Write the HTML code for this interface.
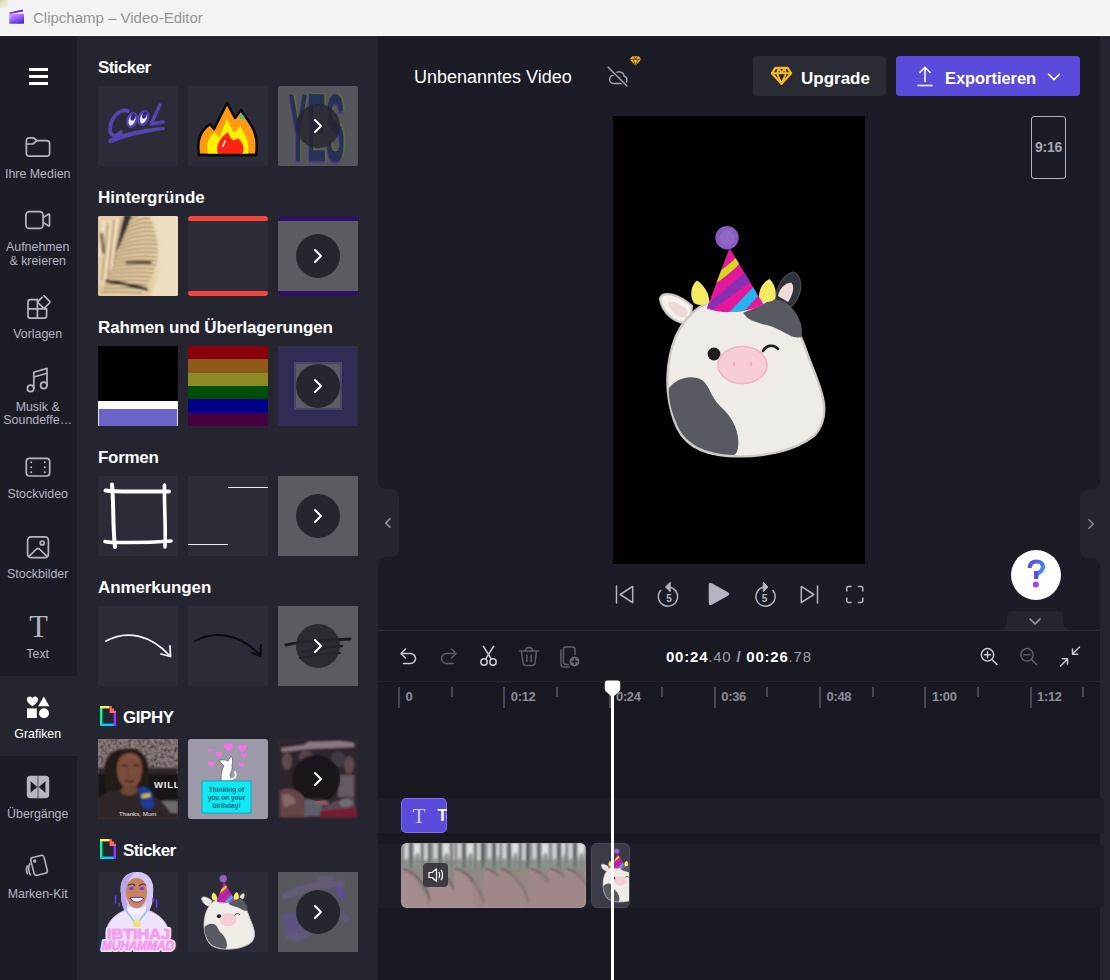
<!DOCTYPE html>
<html lang="de">
<head>
<meta charset="utf-8">
<title>Clipchamp – Video-Editor</title>
<style>
*{box-sizing:border-box;margin:0;padding:0}
html,body{width:1110px;height:980px;overflow:hidden;background:#1c1c26;font-family:"Liberation Sans",sans-serif;}
.abs{position:absolute}
#app{position:relative;width:1110px;height:980px;overflow:hidden;background:#1c1c26}
#titlebar{position:absolute;left:0;top:0;width:1110px;height:37px;background:#f3f3f3;border-bottom:1px solid #0e0e14;box-shadow:inset 0 -1px 0 #fff}
#titlebar .ttl{position:absolute;left:33px;top:8px;font-size:15px;color:#939393;white-space:nowrap;line-height:20px}
#sidebar{position:absolute;left:0;top:36px;width:77px;height:944px;background:#1c1c26}
#panel{position:absolute;left:77px;top:36px;width:301px;height:944px;background:#25252f}
.navlbl{position:absolute;left:-10.800px;width:97px;text-align:center;font-size:12.400px;line-height:14px;color:#b5b5c0;white-space:nowrap}
.h{position:absolute;left:98px;font-weight:bold;font-size:17px;color:#fff;white-space:nowrap;line-height:20px}
.th{position:absolute;width:80px;height:80px;background:#2c2c38;overflow:hidden;border-radius:2px}
.more{position:absolute;left:18px;top:18px;width:44px;height:44px;border-radius:22px;background:#26262e}
.more svg{position:absolute;left:14px;top:13px}
#main{position:absolute;left:378px;top:36px;width:722px;height:594px;background:#1c1c26}
#rstrip{position:absolute;left:1100px;top:36px;width:10px;height:944px;background:#25252f}
#timeline{position:absolute;left:378px;top:630px;width:722px;height:350px;background:#191922}
</style>
</head>
<body>
<div id="app">
<svg width="0" height="0" style="position:absolute">
<defs>
<symbol id="cow" viewBox="655 220 180 245">
  <!-- right ear (dark) -->
  <path d="M775 302 C776 286 784 274 793 272 C800 274 802 284 800 292 C798 300 794 304 790 308 Z" fill="#30343a" stroke="#474d52" stroke-width="1.200"/>
  <path d="M778 296 C779 289 785 283 791 282.500 C794.500 285 794 293 788 302 Z" fill="#efdbd9"/>
  <!-- left ear -->
  <path d="M690 322 C676 326 662 312 660 299 C662 290 678 294 692 306 Z" fill="#f4f1ee" stroke="#d0cbc5" stroke-width="2.200"/>
  <path d="M686 318 C677 318 669 309 668 303 C671 300 680 303 688 311 Z" fill="#f0d8d7"/>
  <!-- body -->
  <path d="M735 296 C768 294 794 314 806 350 C816 380 836 410 815 435 C794 452 760 458 728 456 C700 454 682 444 674 420 C664 392 666 360 676 336 C688 310 708 298 735 296 Z" fill="#efece8" stroke="#cfcac4" stroke-width="2.400"/>
  <!-- dark patch top right -->
  <path d="M743 313 C752 309 760 306 763.500 304 C768 301 772 299 776 299.500 C781 300 785 302 788 304.500 C795 310 799 317 801 324 C802 329 802 333 801.500 337 C797 338 793 337 791 336 C787 334 783 332 779.500 330 C774 327 768 325 762 324 C756 322 750 320 747 317.500 Z" fill="#575b61"/>
  <!-- dark patch bottom left -->
  <path d="M669 388 C676 378 692 374 702 380 C710 386 710 396 720 406 C734 418 740 434 738 448 C737 452 736 454 734 455 C704 454 684 444 676 422 C671 410 668 398 669 388 Z" fill="#575b61"/>
  <!-- horns -->
  <path d="M694 303 C689 296 691 285 697 280.500 C703 284 710 294 709 302 C705 305.500 698 306 694 303 Z" fill="#f6ea62"/>
  <path d="M759 299 C758 290 763 282 769.500 279 C775 284 777 293 775 299 C771 303 763 303 759 299 Z" fill="#f6ea62"/>
  <!-- hat -->
  <path d="M729.500 248 L706.800 308.400 C722 314.500 748 313 763.500 304.300 Z" fill="#e4189c"/>
  <clipPath id="hatc"><path d="M729.500 248 L706.800 308.400 C722 314.500 748 313 763.500 304.300 Z"/></clipPath>
  <g clip-path="url(#hatc)">
    <path d="M738.400 254.900 L740 263 C732 272 722 279 714.900 284 L718.100 271.900 C726 267 733 261 738.400 254.900 Z" fill="#d9d622"/>
    <path d="M705 306 L745.700 271.900 L750.500 281.600 L712 310 Z" fill="#8a2eb4"/>
    <path d="M729.500 312 L753.800 286.500 L757.800 296.200 L742.400 313 Z" fill="#22b4ee"/>
  </g>
  <circle cx="727" cy="237.800" r="11.700" fill="#8a5cbf"/>
  <circle cx="727" cy="237.800" r="7.500" fill="#9468c6"/>
  <!-- eye / wink -->
  <circle cx="714" cy="354" r="6.400" fill="#1d1d1d"/>
  <path d="M763 351 C766 345 774 344 778 349" fill="none" stroke="#1d1d1d" stroke-width="2.600" stroke-linecap="round"/>
  <!-- snout -->
  <ellipse cx="742.500" cy="365" rx="24.500" ry="18.500" fill="#f7cdd6" stroke="#f2b3c2" stroke-width="1.600"/>
  <ellipse cx="734" cy="364" rx="1.300" ry="2.600" fill="#eeb0bf"/>
  <ellipse cx="751" cy="364" rx="1.300" ry="2.600" fill="#eeb0bf"/>
</symbol>
<symbol id="chev" viewBox="0 0 16 18"><path d="M5 3 L11 9 L5 15" fill="none" stroke="#fff" stroke-width="2" stroke-linecap="round" stroke-linejoin="round"/></symbol>
<symbol id="giphy" viewBox="0 0 16 20">
  <rect x="0" y="1" width="2.400" height="18" fill="#00ff99"/>
  <rect x="0" y="17.600" width="16" height="2.400" fill="#00ccff"/>
  <rect x="13.600" y="7" width="2.400" height="13" fill="#9933ff"/>
  <rect x="0" y="0" width="9.600" height="2.400" fill="#fff35c"/>
  <path d="M9.600 0 h2.200 v2.400 h2.100 v2.300 h2.100 v2.400 h-6.400z" fill="#ff6666"/>
</symbol>
</defs>
</svg>

<!-- TITLE BAR -->
<div id="titlebar">
  <svg class="abs" style="left:8px;top:8px" width="18" height="18" viewBox="8 8 18 18">
    <defs><linearGradient id="cc" x1="0" y1="0" x2=".6" y2="1"><stop offset="0" stop-color="#dca6ff"/><stop offset=".45" stop-color="#a86cf8"/><stop offset="1" stop-color="#4a2edc"/></linearGradient></defs>
    <path d="M9.400 12.400 L22.600 9.400 L23.200 11.600 L9.800 13.900 Z" fill="#5b2fc0"/>
    <rect x="9.300" y="13.700" width="14.700" height="10.100" rx=".6" fill="url(#cc)"/>
  </svg>
  <div class="abs" style="left:0;top:0;width:8px;height:8px;background:radial-gradient(circle at 0 0,#cfcf98 0,#e4e4c4 45%,#f3f3f3 100%)"></div>
  <div class="ttl">Clipchamp – Video-Editor</div>
</div>

<!-- SIDEBAR -->
<div id="sidebar"></div>
<!-- selected nav bg -->
<div class="abs" style="left:0;top:676px;width:77px;height:80px;background:#25252f"></div>
<div class="abs" style="left:0;top:596px;width:77px;height:80px;background:#1c1c26;border-bottom-right-radius:6px"></div>
<div class="abs" style="left:0;top:756px;width:77px;height:80px;background:#1c1c26;border-top-right-radius:6px"></div>
<!-- hamburger -->
<div class="abs" style="left:29px;top:68px;width:19px;height:3px;background:#fff"></div>
<div class="abs" style="left:29px;top:75px;width:19px;height:3px;background:#fff"></div>
<div class="abs" style="left:29px;top:82px;width:19px;height:3px;background:#fff"></div>
<!-- folder -->
<svg class="abs" style="left:24px;top:135px" width="28" height="24" viewBox="0 0 28 24" fill="none" stroke="#b6b6c3" stroke-width="1.7" stroke-linejoin="round" stroke-linecap="round">
  <path d="M2.4 5.4 a2.6 2.6 0 0 1 2.6 -2.6 h4.6 l3.2 2.8 h10.2 a2.6 2.6 0 0 1 2.6 2.6 v10.4 a2.6 2.6 0 0 1 -2.6 2.6 h-18 a2.6 2.6 0 0 1 -2.6 -2.6 z"/>
  <path d="M2.4 9 h6.6 l3.6 -3.2"/>
</svg>
<div class="navlbl" style="top:167px">Ihre Medien</div>
<!-- camera -->
<svg class="abs" style="left:24px;top:208px" width="28" height="24" viewBox="0 0 28 24" fill="none" stroke="#b6b6c3" stroke-width="1.7" stroke-linejoin="round" stroke-linecap="round">
  <rect x="1.9" y="3.6" width="17.2" height="16.8" rx="3.4"/>
  <path d="M19.1 9.6 l5.2 -3.3 q1.2 -.6 1.2 .8 v9.8 q0 1.4 -1.2 .8 l-5.2 -3.3"/>
</svg>
<div class="navlbl" style="top:240px">Aufnehmen</div>
<div class="navlbl" style="top:254px">&amp; kreieren</div>
<!-- templates -->
<svg class="abs" style="left:25px;top:293px" width="28" height="27" viewBox="0 0 28 27" fill="none" stroke="#b6b6c3" stroke-width="1.7" stroke-linejoin="round" stroke-linecap="round">
  <path d="M12.4 6.6 h-7 a2.4 2.4 0 0 0 -2.4 2.4 v13.8 a2.4 2.4 0 0 0 2.4 2.4 h13.8 a2.4 2.4 0 0 0 2.4 -2.4 v-6.6"/>
  <path d="M3 15.8 h18.6 M12.4 6.6 v18.6"/>
  <path d="M18.9 2.6 l5.6 5.6 q.9 .9 0 1.8 l-4.7 4.7 q-.9 .9 -1.8 0 l-4.7 -4.7 q-.9 -.9 0 -1.8 l3.8 -3.8"/>
</svg>
<div class="navlbl" style="top:327px">Vorlagen</div>
<!-- music -->
<svg class="abs" style="left:25px;top:365px" width="26" height="29" viewBox="0 0 26 29" fill="none" stroke="#b6b6c3" stroke-width="1.7" stroke-linejoin="round" stroke-linecap="round">
  <circle cx="5.6" cy="23.4" r="3.2"/><circle cx="18.8" cy="20.4" r="3.2"/>
  <path d="M8.8 23.4 V7.2 L22 3.4 V20.4 M8.8 12 L22 8.2"/>
</svg>
<div class="navlbl" style="top:400px">Musik &amp;</div>
<div class="navlbl" style="top:413px">Soundeffe…</div>
<!-- stock video -->
<svg class="abs" style="left:24px;top:455px" width="28" height="24" viewBox="0 0 28 24" fill="none" stroke="#b6b6c3" stroke-width="1.7" stroke-linejoin="round" stroke-linecap="round">
  <rect x="2.3" y="3.4" width="23.4" height="17.6" rx="3.2"/>
  <path d="M7.2 7.2v.1M7.2 12.2v.1M7.2 17.2v.1M20.8 7.2v.1M20.8 12.2v.1M20.8 17.2v.1" stroke-width="2"/>
</svg>
<div class="navlbl" style="top:487px">Stockvideo</div>
<!-- stock images -->
<svg class="abs" style="left:25px;top:534px" width="26" height="26" viewBox="0 0 26 26" fill="none" stroke="#b6b6c3" stroke-width="1.7" stroke-linejoin="round" stroke-linecap="round">
  <rect x="2.6" y="2.8" width="20.8" height="20.8" rx="3.4"/>
  <circle cx="17.2" cy="9" r="2"/>
  <path d="M4.2 22.2 l7.4 -7.2 q1.4 -1.2 2.8 0 l7.4 7.2"/>
</svg>
<div class="navlbl" style="top:567px">Stockbilder</div>
<!-- text -->
<div class="abs" style="left:28px;top:610px;width:21px;font-family:'Liberation Serif',serif;font-size:30.5px;line-height:34px;color:#b6b6c3;text-align:center">T</div>
<div class="navlbl" style="top:647px">Text</div>
<!-- graphics (selected) -->
<svg class="abs" style="left:25px;top:694px" width="26" height="26" viewBox="0 0 26 26" fill="#fff">
  <path d="M7.4 12.2 C3.8 9.6 1.8 7.8 1.8 5.4 a3 3 0 0 1 5.6 -1.4 a3 3 0 0 1 5.6 1.4 c0 2.4 -2 4.200 -5.600 6.800z"/>
  <path d="M18.800 2.400 l5.600 9.800 h-11.200z"/>
  <rect x="2" y="14.400" width="9.800" height="9.600"/>
  <circle cx="19" cy="19.200" r="5"/>
</svg>
<div class="navlbl" style="top:727px;color:#fff">Grafiken</div>
<!-- transitions -->
<svg class="abs" style="left:25px;top:774px" width="26" height="26" viewBox="0 0 26 26">
  <rect x="1.800" y="1.800" width="22.400" height="22.400" rx="3.600" fill="#b6b6c3"/>
  <path d="M5.600 7.200 l6.600 5.800 l-6.600 5.800z M20.400 7.200 l-6.600 5.800 l6.600 5.800z" fill="#1c1c26"/>
  <path d="M13 2 v22" stroke="#1c1c26" stroke-width="1.200" opacity=".55"/>
</svg>
<div class="navlbl" style="top:807px">Übergänge</div>
<!-- brand kit -->
<svg class="abs" style="left:24px;top:853px" width="28" height="26" viewBox="0 0 28 26" fill="none" stroke="#b6b6c3" stroke-width="1.600" stroke-linejoin="round" stroke-linecap="round">
  <g transform="rotate(-14 15 13)"><rect x="8.400" y="3.200" width="13.600" height="18.400" rx="2.600"/><circle cx="12" cy="7.200" r=".9" fill="#b6b6c3"/></g>
  <path d="M5.800 10.600 q-2.600 5.200 .6 11.200" />
  <path d="M3.200 13.200 q-1.600 3.600 .2 7.400" />
</svg>
<div class="navlbl" style="top:887px">Marken-Kit</div>

<!-- PANEL -->
<div id="panel"></div>
<!-- ===== Row 1: Sticker ===== -->
<div class="h" style="top:58px;letter-spacing:-.58px">Sticker</div>
<div class="th" style="left:98px;top:86px">
 <svg width="80" height="80" viewBox="0 0 80 80">
  <path d="M11 53 C26 46 48 42 66 41 C67 42 67 43 66 44 C50 46 30 50 14 57 C11 58 9 55 11 53 Z" fill="#5145b0"/>
  <path d="M30 25 C22 22 13 31 12 43 C12 50 18 52 23 46" fill="none" stroke="#5145b0" stroke-width="3.800" stroke-linecap="round"/>
  <ellipse cx="34" cy="34" rx="4.400" ry="7" transform="rotate(20 34 34)" fill="#e9e6ff" stroke="#5145b0" stroke-width="2.400"/>
  <ellipse cx="45.500" cy="32" rx="4.400" ry="7" transform="rotate(20 45.500 32)" fill="#e9e6ff" stroke="#5145b0" stroke-width="2.400"/>
  <ellipse cx="35" cy="31" rx="2.200" ry="3.800" transform="rotate(20 35 31)" fill="#332a80"/>
  <ellipse cx="46.500" cy="29" rx="2.200" ry="3.800" transform="rotate(20 46.500 29)" fill="#332a80"/>
  <path d="M62 19 L53 38 L65 36" fill="none" stroke="#5145b0" stroke-width="3.400" stroke-linecap="round" stroke-linejoin="round"/>
 </svg>
</div>
<div class="th" style="left:188px;top:86px">
 <svg width="80" height="80" viewBox="0 0 80 80">
  <path d="M11 69 C8 52 14 44 22 38 L26 43 L39 17 L47 32 L53 24 C60 36 72 44 68 69 Z" fill="#ff9a12" stroke="#0a0a0a" stroke-width="2.600" stroke-linejoin="round"/>
  <path d="M20 68 C17 56 22 50 27 46 L31 52 L39 33 L46 47 L52 40 C56 48 62 54 60 68 Z" fill="#fff200"/>
  <path d="M30 68 C27 60 32 52 40 46 C42 54 46 56 50 52 C56 58 57 64 54 68 Z" fill="#ff2412"/>
  <path d="M35 60 l2 -5" stroke="#fff" stroke-width="1.600" stroke-linecap="round"/>
  <rect x="52" y="29" width="4" height="4" transform="rotate(30 54 31)" fill="#19d3a2"/>
  <path d="M11 69 H68" stroke="#0a0a0a" stroke-width="2.600" stroke-linecap="round"/>
 </svg>
</div>
<div class="th" style="left:278px;top:86px;background:#55555c">
 <svg width="80" height="80" viewBox="0 0 80 80">
  <g font-family="Liberation Sans" font-weight="bold" transform="scale(.56 1)">
   <text x="19" y="75" fill="#5f6b3c" transform="translate(3 -1)" textLength="100" lengthAdjust="spacingAndGlyphs" style="font-size:97px">YES</text>
   <text x="19" y="75" fill="#4f3a7c" transform="translate(-1 2)" textLength="100" lengthAdjust="spacingAndGlyphs" style="font-size:97px">YES</text>
   <text x="19" y="75" fill="#263158" textLength="100" lengthAdjust="spacingAndGlyphs" style="font-size:97px">YES</text>
  </g>
 </svg>
 <div class="more" style="background:rgba(38,38,46,.82)"><svg width="16" height="18"><use href="#chev"/></svg></div>
</div>

<!-- ===== Row 2: Hintergründe ===== -->
<div class="h" style="top:188px">Hintergründe</div>
<div class="th" style="left:98px;top:216px;background:#e9dabb">
 <svg width="80" height="80" viewBox="0 0 80 80">
  <defs><filter id="bl1" x="-20%" y="-20%" width="140%" height="140%"><feGaussianBlur stdDeviation="1"/></filter>
  <filter id="bl2" x="-20%" y="-20%" width="140%" height="140%"><feGaussianBlur stdDeviation="2"/></filter>
  <linearGradient id="pg" x1="0" y1="0" x2="1" y2="0"><stop offset="0" stop-color="#dcc39a"/><stop offset=".65" stop-color="#e2cba2"/><stop offset=".82" stop-color="#ecdfc0"/><stop offset="1" stop-color="#ece0c2"/></linearGradient></defs>
  <rect width="80" height="80" fill="url(#pg)"/>
  <path d="M48 -4 C66 18 70 52 50 84 L84 84 L84 -4 Z" fill="#ecdfc0" filter="url(#bl2)"/>
  <g filter="url(#bl1)" stroke-linecap="round" fill="none">
   <path d="M0 0 h26 L16 30 L6 70 L0 70 Z" fill="#e6d0aa" stroke="none"/>
   <path d="M4 64 L10 8 M10 60 L16 4 M16 46 L23 2" stroke="#b89a70" stroke-width="1.700"/>
   <path d="M7 62 L13 6 M13 54 L19.500 3 M1 40 L6 6" stroke="#f3e6cc" stroke-width="1.800"/>
   <path d="M3.500 18 L5.500 36" stroke="#5c4838" stroke-width="3.200" opacity=".8"/>
   <path d="M27.0 8.0 Q41.5 -4.0 50.0 -2.0" stroke="#9a7c54" stroke-width="1.500"/>
   <path d="M27.0 9.9 Q41.5 -2.1 50.0 -0.1" stroke="#f0dcb6" stroke-width="1.300"/>
   <path d="M26.4 11.6 Q42.0 0.5 51.6 2.8" stroke="#9a7c54" stroke-width="1.500"/>
   <path d="M26.4 13.5 Q42.0 2.4 51.6 4.7" stroke="#f0dcb6" stroke-width="1.300"/>
   <path d="M25.5 15.2 Q42.3 4.8 53.2 7.3" stroke="#9a7c54" stroke-width="1.500"/>
   <path d="M25.5 17.1 Q42.3 6.7 53.2 9.2" stroke="#f0dcb6" stroke-width="1.300"/>
   <path d="M24.6 18.7 Q42.6 9.1 54.6 11.6" stroke="#9a7c54" stroke-width="1.500"/>
   <path d="M24.6 20.6 Q42.6 11.0 54.6 13.5" stroke="#f0dcb6" stroke-width="1.300"/>
   <path d="M23.6 22.3 Q42.8 13.4 56.0 15.9" stroke="#9a7c54" stroke-width="1.500"/>
   <path d="M23.6 24.2 Q42.8 15.3 56.0 17.8" stroke="#f0dcb6" stroke-width="1.300"/>
   <path d="M22.6 25.9 Q42.8 17.6 57.1 20.2" stroke="#9a7c54" stroke-width="1.500"/>
   <path d="M22.6 27.8 Q42.8 19.5 57.1 22.1" stroke="#f0dcb6" stroke-width="1.300"/>
   <path d="M21.5 29.5 Q42.7 21.8 58.0 24.4" stroke="#9a7c54" stroke-width="1.500"/>
   <path d="M21.5 31.4 Q42.7 23.7 58.0 26.3" stroke="#f0dcb6" stroke-width="1.300"/>
   <path d="M20.4 33.1 Q42.5 26.0 58.6 28.5" stroke="#9a7c54" stroke-width="1.500"/>
   <path d="M20.4 35.0 Q42.5 27.9 58.6 30.4" stroke="#f0dcb6" stroke-width="1.300"/>
   <path d="M19.2 36.6 Q42.1 30.2 59.0 32.7" stroke="#9a7c54" stroke-width="1.500"/>
   <path d="M19.2 38.5 Q42.1 32.1 59.0 34.6" stroke="#f0dcb6" stroke-width="1.300"/>
   <path d="M18.0 40.2 Q41.5 34.3 59.1 36.8" stroke="#9a7c54" stroke-width="1.500"/>
   <path d="M18.0 42.1 Q41.5 36.2 59.1 38.7" stroke="#f0dcb6" stroke-width="1.300"/>
   <path d="M16.8 43.8 Q40.8 38.5 58.8 40.9" stroke="#9a7c54" stroke-width="1.500"/>
   <path d="M16.8 45.7 Q40.8 40.4 58.8 42.8" stroke="#f0dcb6" stroke-width="1.300"/>
   <path d="M15.6 47.4 Q39.9 42.6 58.2 45.0" stroke="#9a7c54" stroke-width="1.500"/>
   <path d="M15.6 49.3 Q39.9 44.5 58.2 46.9" stroke="#f0dcb6" stroke-width="1.300"/>
   <path d="M14.3 50.9 Q38.8 46.8 57.3 49.0" stroke="#9a7c54" stroke-width="1.500"/>
   <path d="M14.3 52.8 Q38.8 48.7 57.3 50.9" stroke="#f0dcb6" stroke-width="1.300"/>
   <path d="M13.0 54.5 Q37.6 50.9 56.1 53.0" stroke="#9a7c54" stroke-width="1.500"/>
   <path d="M13.0 56.4 Q37.6 52.8 56.1 54.9" stroke="#f0dcb6" stroke-width="1.300"/>
   <path d="M11.7 58.1 Q36.2 55.0 54.6 57.1" stroke="#9a7c54" stroke-width="1.500"/>
   <path d="M11.7 60.0 Q36.2 56.9 54.6 59.0" stroke="#f0dcb6" stroke-width="1.300"/>
   <path d="M10.4 61.7 Q34.7 59.1 52.9 61.1" stroke="#9a7c54" stroke-width="1.500"/>
   <path d="M10.4 63.6 Q34.7 61.0 52.9 63.0" stroke="#f0dcb6" stroke-width="1.300"/>
   <path d="M9.1 65.3 Q33.0 63.2 50.9 65.1" stroke="#9a7c54" stroke-width="1.500"/>
   <path d="M9.1 67.2 Q33.0 65.1 50.9 67.0" stroke="#f0dcb6" stroke-width="1.300"/>
   <path d="M7.7 68.8 Q31.2 67.3 48.7 69.1" stroke="#9a7c54" stroke-width="1.500"/>
   <path d="M7.7 70.7 Q31.2 69.2 48.7 71.0" stroke="#f0dcb6" stroke-width="1.300"/>
   <path d="M6.4 72.4 Q29.4 71.4 46.4 73.0" stroke="#9a7c54" stroke-width="1.500"/>
   <path d="M6.4 74.3 Q29.4 73.3 46.4 74.9" stroke="#f0dcb6" stroke-width="1.300"/>
   <path d="M5.0 76.0 Q27.5 75.5 44.0 77.0" stroke="#9a7c54" stroke-width="1.500"/>
   <path d="M5.0 77.9 Q27.5 77.4 44.0 78.9" stroke="#f0dcb6" stroke-width="1.300"/>
   <path d="M26 -1 L34 -1 L21 31 L18 36 L22 18 Z" fill="#39312d" stroke="none"/>
   <path d="M29 46 L52 46.500" stroke="#4f3d2c" stroke-width="3.200" opacity=".85"/>
   <path d="M9 65 C24 67 36 70 48 73" stroke="#2a2420" stroke-width="3.200"/>
  </g>
 </svg>
</div>
<div class="th" style="left:188px;top:216px;border-radius:3px">
 <div class="abs" style="left:0;top:0;width:80px;height:5px;background:#f4433c;border-radius:2px"></div>
 <div class="abs" style="left:0;top:75px;width:80px;height:5px;background:#f4433c;border-radius:2px"></div>
</div>
<div class="th" style="left:278px;top:216px;background:#5b5b62">
 <div class="abs" style="left:0;top:0;width:80px;height:5px;background:#2e1263"></div>
 <div class="abs" style="left:0;top:75px;width:80px;height:5px;background:#2e1263"></div>
 <div class="more"><svg width="16" height="18"><use href="#chev"/></svg></div>
</div>

<!-- ===== Row 3: Rahmen ===== -->
<div class="h" style="top:318px;letter-spacing:-.13px">Rahmen und Überlagerungen</div>
<div class="th" style="left:98px;top:346px;background:#000;border-radius:0">
 <div class="abs" style="left:0;top:55px;width:80px;height:8px;background:#fffffa"></div>
 <div class="abs" style="left:0;top:63px;width:80px;height:17px;background:#6c63c6;border-left:1px solid #e8e6ff;border-right:1px solid #e8e6ff"></div>
</div>
<div class="th" style="left:188px;top:346px;border-radius:0;background:linear-gradient(#8a0008 0,#8a0008 13px,#8d5a1c 13px,#8d5a1c 27px,#8b8a24 27px,#8b8a24 40px,#004f08 40px,#004f08 53px,#00008a 53px,#00008a 67px,#47003f 67px,#47003f 80px)"></div>
<div class="th" style="left:278px;top:346px;background:#2f2c56;border-radius:0">
 <div class="abs" style="left:16px;top:16px;width:48px;height:48px;background:#5c5c69;border:2px solid #4a4866"></div>
 <div class="more"><svg width="16" height="18"><use href="#chev"/></svg></div>
</div>

<!-- ===== Row 4: Formen ===== -->
<div class="h" style="top:448px;letter-spacing:-.3px">Formen</div>
<div class="th" style="left:98px;top:476px">
 <svg width="80" height="80" viewBox="0 0 80 80" fill="none" stroke="#fff" stroke-linecap="round">
  <path d="M7.500 14.500 C20 16.500 50 15 71 15.500" stroke-width="4"/>
  <path d="M7 65.500 C10 66.500 40 67.500 73 65" stroke-width="3.600"/>
  <path d="M14 8.500 C16 30 14.500 50 17 71" stroke-width="4"/>
  <path d="M66.500 9 C66 30 68 50 67 71" stroke-width="3.600"/>
 </svg>
</div>
<div class="th" style="left:188px;top:476px">
 <div class="abs" style="left:40px;top:11px;width:40px;height:1px;background:#f0f0f4"></div>
 <div class="abs" style="left:0;top:68px;width:40px;height:1px;background:#f0f0f4"></div>
</div>
<div class="th" style="left:278px;top:476px;background:#5b5b62;border-radius:0"><div class="more"><svg width="16" height="18"><use href="#chev"/></svg></div></div>

<!-- ===== Row 5: Anmerkungen ===== -->
<div class="h" style="top:578px;letter-spacing:-.1px">Anmerkungen</div>
<div class="th" style="left:98px;top:606px">
 <svg width="80" height="80" viewBox="0 0 80 80" fill="none" stroke="#f4f4f6" stroke-linecap="round" stroke-linejoin="round">
  <path d="M8 35 C28 24 52 28 72 50" stroke-width="1.800"/>
  <path d="M72 40 L72.500 50.500 L63 48" stroke-width="1.800"/>
 </svg>
</div>
<div class="th" style="left:188px;top:606px">
 <svg width="80" height="80" viewBox="0 0 80 80" fill="none" stroke="#0c0c10" stroke-linecap="round" stroke-linejoin="round">
  <path d="M7 35 C27 24 52 28 72 49" stroke-width="1.800"/>
  <path d="M73 39 L72.500 50 L64 47" stroke-width="2"/>
 </svg>
</div>
<div class="th" style="left:278px;top:606px;background:#5b5b62;border-radius:0">
 <svg width="80" height="80" viewBox="0 0 80 80" fill="none" stroke="#1b1b20" stroke-linecap="round">
  <path d="M8 39 C30 34 55 34 72 33" stroke-width="3"/>
  <path d="M24 46 C40 42 55 41 64 40" stroke-width="2.400"/>
  <path d="M22 52 C40 48 52 47 62 47" stroke-width="2"/>
 </svg>
 <div class="more" style="background:rgba(38,38,46,.9)"><svg width="16" height="18"><use href="#chev"/></svg></div>
</div>

<!-- ===== Row 6: GIPHY ===== -->
<svg class="abs" style="left:100px;top:706px" width="16" height="20"><use href="#giphy"/></svg>
<div class="h" style="left:123px;top:708px;letter-spacing:-.46px">GIPHY</div>
<div class="th" style="left:98px;top:739px;background:#3a3434;border-radius:0">
 <svg width="80" height="80" viewBox="0 0 80 80">
  <defs><filter id="bl3" x="-10%" y="-10%" width="120%" height="120%"><feGaussianBlur stdDeviation=".8"/></filter>
  <filter id="nz" x="0" y="0" width="100%" height="100%"><feTurbulence type="fractalNoise" baseFrequency=".3" numOctaves="2" seed="7"/><feColorMatrix type="matrix" values="1.100 0 0 0 -.1  .95 0 0 0 -.1  .9 .1 0 0 -.1  0 0 0 0 1"/><feGaussianBlur stdDeviation=".45"/></filter>
  <filter id="nz2" x="0" y="0" width="100%" height="100%"><feTurbulence type="fractalNoise" baseFrequency=".5" numOctaves="2" seed="3"/><feColorMatrix type="matrix" values=".5 0 0 0 .02  0 .42 0 0 .02  0 0 .4 0 .02  0 0 0 0 1"/></filter>
  </defs>
  <rect x="0" y="0" width="80" height="34" filter="url(#nz)"/>
  <rect x="0" y="0" width="80" height="34" fill="#33261f" opacity=".45"/>
  <g filter="url(#bl3)">
   <rect x="0" y="29" width="80" height="8" fill="#2e2829"/>
   <rect x="0" y="35" width="80" height="32" fill="#141213"/>
   <rect x="56" y="62" width="24" height="12" fill="#6e6a6c"/>
   <rect x="0" y="74" width="80" height="6" fill="#2b2728"/>
   <!-- hair -->
   <path d="M7 36 C4 20 14 9 28 10 C42 8 52 18 50 34 C53 44 50 52 44 56 L12 56 C6 50 5 44 7 36 Z" fill="#241a16"/>
   <!-- face -->
   <path d="M19 30 C19 18 25 14 32 14 C40 14 44 20 44 30 C44 42 38 50 32 50 C25 50 19 42 19 30 Z" fill="#7a4e3a"/>
   <path d="M23 26.500 h6.500 M35 26.500 h6.500" stroke="#22140f" stroke-width="1.700"/>
   <path d="M30 29 C30 34 29 36 31 37 L34 37" stroke="#5d3826" stroke-width="1" fill="none"/>
   <path d="M27.500 41.500 q4.500 2.500 9 0" stroke="#4a2420" stroke-width="1.900" fill="none"/>
   <path d="M24 21 C27 17 37 17 41 21 C37 15 27 15 24 21Z" fill="#946248"/>
   <!-- body -->
   <path d="M0 80 L0 60 C8 51 18 50 26 52 L38 52 C52 52 66 60 76 80 Z" fill="#2e2526"/>
   <path d="M22 52 C26 58 36 58 40 52 L38 47 L26 47 Z" fill="#6e4634"/>
   <!-- mic -->
   <path d="M40 50 C44 46 52 48 54 54 L56 67 C54 71 46 71 44 67 Z" fill="#1c3a98"/>
   <rect x="43.500" y="55" width="9" height="3.600" fill="#d8c61e" transform="rotate(-10 48 57)"/>
  </g>
    <text x="56" y="48.500" font-family="Liberation Sans" font-weight="bold" font-size="9.500" fill="#ececec" letter-spacing=".8">WILL</text>
  <text x="21" y="77" font-family="Liberation Sans" font-size="6.200" fill="#e4e4e4">Thanks, Mom</text>
 </svg>
</div>
<div class="th" style="left:188px;top:739px;background:#9c99a9;border-radius:3px">
 <svg width="80" height="80" viewBox="0 0 80 80">
  <g fill="#f273e6">
   <defs><path id="ht" d="M0 -1.500 C-1 -3.500 -4 -3 -4 -.5 C-4 1.500 -1.500 3 0 4.500 C1.500 3 4 1.500 4 -.5 C4 -3 1 -3.500 0 -1.500Z"/></defs>
   <use href="#ht" transform="translate(21.9 11.3) scale(0.6)" opacity="0.75"/>
   <use href="#ht" transform="translate(40.5 7.6) scale(1.15)" opacity="1"/>
   <use href="#ht" transform="translate(54.3 8.6) scale(1.1)" opacity="1"/>
   <use href="#ht" transform="translate(30.8 15.1) scale(0.85)" opacity="1"/>
   <use href="#ht" transform="translate(56 16.2) scale(0.75)" opacity="0.85"/>
   <use href="#ht" transform="translate(23.5 24.8) scale(0.85)" opacity="0.95"/>
   <use href="#ht" transform="translate(53.5 25.5) scale(0.7)" opacity="0.85"/>
  </g>
  <!-- cat -->
  <g fill="#fff" stroke="#55506a" stroke-width=".7">
   <path d="M33 42 C33 34 34 30 36 27 L31 22 C34 20 38 21 40 22 L43 17 C45 19 45 23 44 26 C45 30 43 33 42 36 C43 39 43 41 43 42 Z"/>
   <path d="M43 40 C47 40 49 36 47 33" fill="none" stroke="#fff" stroke-width="1.800" stroke-linecap="round"/>
  </g>
  <rect x="14" y="42" width="49" height="32" fill="#10e8f4" stroke="#0aa9b8" stroke-width="1"/>
  <g font-family="Liberation Sans" font-size="6.600" fill="#0a6a78" text-anchor="middle" font-weight="bold">
   <text x="38.500" y="52.500">Thinking of</text><text x="38.500" y="60.500">you on your</text><text x="38.500" y="68.500">birthday!</text>
  </g>
 </svg>
</div>
<div class="th" style="left:278px;top:739px;background:#2c262c;border-radius:0">
 <svg width="80" height="80" viewBox="0 0 80 80">
  <defs><filter id="bl4" x="-10%" y="-10%" width="120%" height="120%"><feGaussianBlur stdDeviation="1.300"/></filter></defs>
  <g filter="url(#bl4)">
   <rect width="80" height="80" fill="#2e272d"/>
   <path d="M3 9 L26 6 L30 3 L62 2 L76 4 L76 8 L30 10 L4 13 Z" fill="#8a7880"/>
   <ellipse cx="9" cy="22" rx="5" ry="9" fill="#5c484c"/>
   <ellipse cx="28" cy="18" rx="7" ry="7" fill="#564247"/>
   <ellipse cx="60" cy="20" rx="7" ry="8" fill="#3c3a42"/>
   <ellipse cx="71" cy="26" rx="5" ry="9" fill="#5e4a4e"/>
   <rect x="60" y="36" width="16" height="22" fill="#645a62"/>
   <ellipse cx="38" cy="40" rx="24" ry="24" fill="#1c191e"/>
   <path d="M2 52 C8 48 20 50 26 58 L30 78 L2 78 Z" fill="#664548"/>
   <path d="M4 56 C10 54 16 56 18 64 L6 68 Z" fill="#86686c"/>
   <rect x="27" y="60" width="17" height="17" fill="#5e5e6a"/>
   <path d="M36 62 C44 58 52 62 50 66 L38 66 Z" fill="#8a5a64"/>
   <path d="M44 70 C54 62 64 60 76 58 L78 78 L42 78 Z" fill="#5a4a52"/>
   <path d="M42 72 L78 68 L78 78 L42 78 Z" fill="#741c30"/>
   <ellipse cx="68" cy="64" rx="7" ry="4" fill="#6e7078"/>
  </g>
 </svg>
 <div class="more" style="background:rgba(24,21,26,.6)"><svg width="16" height="18"><use href="#chev"/></svg></div>
</div>

<!-- ===== Row 7: Sticker (GIPHY) ===== -->
<svg class="abs" style="left:100px;top:839px" width="16" height="20"><use href="#giphy"/></svg>
<div class="h" style="left:123px;top:841px;letter-spacing:-.58px">Sticker</div>
<div class="th" style="left:98px;top:872px">
 <svg width="80" height="80" viewBox="0 0 80 80">
  <!-- hijab -->
  <path d="M23 22 C21 6 29 0 39 0 C50 0 57 8 55 22 C56 32 51 40 47 44 L30 44 C25 38 23 30 23 22 Z" fill="#d5c8f6"/>
  <path d="M23 22 C21 6 29 0 39 0 C33 2 28 10 28 22 C28 30 30 36 33 40 L30 44 C25 38 23 30 23 22 Z" fill="#b9a6ea"/>
  <!-- face -->
  <path d="M28 20 C28 10 33 6 38.500 6 C45 6 49 11 49 20 C49 30 44 36 38.500 36 C33 36 28 30 28 20 Z" fill="#c8855c"/>
  <path d="M30 13.500 C33 11 36 12 37 14 M41 14 C43 12 46 11 48 13.500" stroke="#4a2a6a" stroke-width="1.200" fill="none"/>
  <ellipse cx="33.500" cy="16.500" rx="2.400" ry="1.500" fill="#6c3cf0"/><ellipse cx="44" cy="16.500" rx="2.400" ry="1.500" fill="#6c3cf0"/>
  <path d="M32 26 C35 31.500 43 31.500 46 26 C42 25 36 25 32 26Z" fill="#f4eefc" stroke="#5a2ab8" stroke-width="1"/>
  <!-- neck/uniform -->
  <path d="M8 60 C10 46 22 40 30 37 L47 37 C56 40 68 46 71 60 L71 70 L8 70 Z" fill="#ece4fb" stroke="#c9b8f0" stroke-width="1"/>
  <path d="M29 33 C34 38 44 38 48 33 L48 42 L29 42z" fill="#f4f0fc"/>
  <path d="M27 37 L38.500 53 L50 37" fill="none" stroke="#9fc0f0" stroke-width="1.800"/>
  <circle cx="39" cy="51.500" r="4" fill="#efe07a"/>
  <g stroke="#6a3df0" stroke-width="1.500" stroke-linecap="round"><path d="M17.500 24 v7 M21 31 v3 M58.500 28 v7 M55 26 v3"/></g>
  <!-- text -->
  <g font-family="Liberation Sans" font-weight="bold" text-anchor="middle" stroke="#f3e2fa" stroke-width="4.200" stroke-linejoin="round" stroke-linecap="round" fill="#f3e2fa">
   <text x="40.500" y="66.500" font-size="15.500" textLength="63" lengthAdjust="spacingAndGlyphs">IBTIHAJ</text>
   <text x="40" y="78" font-size="12.500" textLength="72" lengthAdjust="spacingAndGlyphs" font-style="italic">MUHAMMAD</text>
  </g>
  <g font-family="Liberation Sans" font-weight="bold" text-anchor="middle" fill="#f29ded" stroke="#f29ded" stroke-width=".9" stroke-linejoin="round">
   <text x="40.500" y="66.500" font-size="15.500" textLength="63" lengthAdjust="spacingAndGlyphs">IBTIHAJ</text>
   <text x="40" y="78" font-size="12.500" textLength="72" lengthAdjust="spacingAndGlyphs" font-style="italic">MUHAMMAD</text>
  </g>
 </svg>
</div>
<div class="th" style="left:188px;top:872px">
 <svg class="abs" style="left:11.500px;top:1px" width="58" height="79"><use href="#cow"/></svg>
</div>
<div class="th" style="left:278px;top:872px;background:#57575e;border-radius:0">
 <svg width="80" height="80" viewBox="0 0 80 80" fill="none">
  <defs><filter id="bl5" x="-10%" y="-10%" width="120%" height="120%"><feGaussianBlur stdDeviation="1.200"/></filter></defs>
  <g filter="url(#bl5)">
  <path d="M4 22 C20 12 44 8 66 8 L67 15 C46 15 24 20 6 28 Z" fill="#635c78"/>
  <path d="M40 4 h16 v5 h-16z" fill="#615a74"/>
  <path d="M58 14 C64 16 68 20 67 26 L60 27 C60 22 58 19 55 17 Z" fill="#5d4d92"/>
  <path d="M5 42 C10 40 18 40 24 42 L26 62 C20 66 12 66 7 62 Z" fill="#5c5282"/>
  <path d="M8 60 C16 64 24 62 30 58 L32 64 C24 70 14 70 8 66 Z" fill="#60587a"/>
  <path d="M62 38 C68 40 72 44 72 50 L64 50 Z" fill="#5e5878"/>
  </g>
 </svg>
 <div class="more"><svg width="16" height="18"><use href="#chev"/></svg></div>
</div>

<!-- MAIN -->
<div id="main"></div>
<div id="rstrip"></div>
<!-- left collapse handle -->
<div class="abs" style="left:378px;top:489px;width:21px;height:68px;background:#25252f;border-radius:0 8px 8px 0"></div>
<svg class="abs" style="left:378px;top:479px" width="10" height="10"><path d="M0 0 A10 10 0 0 0 10 10 L0 10Z" fill="#25252f" transform="translate(0 0) scale(1 1)" style="display:none"/><path d="M0 0 Q0 10 8 10 L0 10 Z" fill="#25252f"/></svg>
<svg class="abs" style="left:378px;top:557px" width="10" height="10"><path d="M0 10 Q0 0 8 0 L0 0 Z" fill="#25252f"/></svg>
<svg class="abs" style="left:383px;top:516px" width="10" height="14" viewBox="0 0 10 14"><path d="M7 2.800 L2.800 7 L7 11.200" fill="none" stroke="#9c9ca8" stroke-width="1.600" stroke-linecap="round" stroke-linejoin="round"/></svg>
<!-- right collapse handle -->
<div class="abs" style="left:1080px;top:490px;width:21px;height:68px;background:#25252f;border-radius:8px 0 0 8px"></div>
<svg class="abs" style="left:1092px;top:480px" width="8" height="10"><path d="M8 0 Q8 10 0 10 L8 10 Z" fill="#25252f"/></svg>
<svg class="abs" style="left:1092px;top:558px" width="8" height="10"><path d="M8 10 Q8 0 0 0 L8 0 Z" fill="#25252f"/></svg>
<svg class="abs" style="left:1086px;top:517px" width="10" height="14" viewBox="0 0 10 14"><path d="M3 2.800 L7.200 7 L3 11.200" fill="none" stroke="#8a8a96" stroke-width="1.600" stroke-linecap="round" stroke-linejoin="round"/></svg>

<!-- header -->
<div class="abs" style="left:414px;top:66px;font-size:18px;line-height:22px;color:#fff;white-space:nowrap">Unbenanntes Video</div>
<svg class="abs" style="left:605px;top:52px" width="40" height="38" viewBox="0 0 40 38">
  <g fill="none" stroke-linecap="round" stroke-linejoin="round">
   <path d="M8 31.500 H18.500 A3.600 3.600 0 0 0 19.200 24.400 A5.200 5.200 0 0 0 9.200 23.200 A4.200 4.200 0 0 0 8 31.500 Z" stroke="#a9a9b6" stroke-width="1.400"/>
   <path d="M3.200 15.200 L22 34" stroke="#1c1c26" stroke-width="4"/>
   <path d="M3.200 15.200 L22 34" stroke="#a9a9b6" stroke-width="1.400"/>
  </g>
  <path d="M27.300 4.200 h6.400 l2.600 3.100 l-5.800 6.500 l-5.800 -6.500z" fill="#f7b928"/>
  <path d="M24.700 7.300 h11.600 M28.600 4.400 l1.900 2.900 l1.900 -2.900 M28 7.300 l2.500 6.200 l2.500 -6.200" stroke="#1c1c26" stroke-width=".7" fill="none"/>
</svg>
<!-- upgrade -->
<div class="abs" style="left:753px;top:56px;width:133px;height:40px;background:#2b2b36;border-radius:4px"></div>
<svg class="abs" style="left:769px;top:65px" width="26" height="22" viewBox="0 0 26 22" fill="none" stroke="#f7b928" stroke-linejoin="round" stroke-linecap="round">
  <path d="M6.400 2.900 H18.600 L22.100 8.300 L12.500 18.800 L2.900 8.300 Z" stroke-width="2.300" fill="#23232c"/>
  <path d="M2.900 8.300 H22.100 M9.600 2.900 L8 8.300 L12.500 18.800 L17 8.300 L15.400 2.900 M9.600 2.900 L12.500 8.300 L15.400 2.900" stroke-width="1.900"/>
</svg>
<div class="abs" style="left:801px;top:67.500px;font-size:17px;font-weight:bold;line-height:22px;color:#fff">Upgrade</div>
<!-- export -->
<div class="abs" style="left:896px;top:56px;width:184px;height:40px;background:#5b4bdb;border-radius:4px"></div>
<svg class="abs" style="left:914px;top:64px" width="22" height="24" viewBox="0 0 22 24" fill="none" stroke="#fff" stroke-width="1.500" stroke-linecap="round" stroke-linejoin="round">
  <path d="M11 17.500 V3.500 M5.800 8.500 L11 3.300 L16.200 8.500 M4 21.500 H18"/>
</svg>
<div class="abs" style="left:945px;top:67px;font-size:16.400px;font-weight:bold;line-height:22px;color:#fff">Exportieren</div>
<svg class="abs" style="left:1046px;top:71px" width="16" height="12" viewBox="0 0 16 12" fill="none" stroke="#fff" stroke-width="1.500" stroke-linecap="round" stroke-linejoin="round"><path d="M2.500 3.200 L8 8.600 L13.500 3.200"/></svg>

<!-- preview -->
<div class="abs" style="left:613px;top:116px;width:252px;height:448px;background:#000"></div>
<svg class="abs" style="left:655px;top:220px" width="180" height="245"><use href="#cow"/></svg>
<!-- aspect -->
<div class="abs" style="left:1031px;top:116px;width:35px;height:63px;border:1px solid #b4b4bf;border-radius:3px;color:#a6a6b0;font-size:14px;font-weight:bold;text-align:center;line-height:61px;letter-spacing:-.3px">9:16</div>

<!-- playback controls -->
<svg class="abs" style="left:600px;top:575px" width="280" height="40" viewBox="600 575 280 40" fill="none" stroke="#b4b4c2" stroke-width="1.500" stroke-linecap="round" stroke-linejoin="round">
  <!-- skip back -->
  <path d="M616.500 586 V603"/><path d="M632.700 586.400 L620.200 594.500 L632.700 602.600 Z"/>
  <!-- back 5 -->
  <path d="M660.500 590.500 A 9.600 9.600 0 1 0 669 587"/>
  <path d="M670 582.500 L665.500 587 L670 591.500 Z" fill="#b4b4c2" stroke-width="1"/>
  <text x="669" y="601.500" font-family="Liberation Sans" font-weight="bold" font-size="10" fill="#b4b4c2" stroke="none" text-anchor="middle">5</text>
  <!-- play -->
  <path d="M709.500 585 Q709.500 583 711.500 584 L727.500 592.800 Q729.500 594 727.500 595.200 L711.500 604 Q709.500 605 709.500 603 Z" fill="#b4b4c2"/>
  <!-- fwd 5 -->
  <path d="M773 590.500 A 9.600 9.600 0 1 1 764.500 587"/>
  <path d="M763.500 582.500 L768 587 L763.500 591.500 Z" fill="#b4b4c2" stroke-width="1"/>
  <text x="764.500" y="601.500" font-family="Liberation Sans" font-weight="bold" font-size="10" fill="#b4b4c2" stroke="none" text-anchor="middle">5</text>
  <!-- skip fwd -->
  <path d="M817.500 586 V603"/><path d="M801.300 586.400 L813.800 594.500 L801.300 602.600 Z"/>
  <!-- fullscreen -->
  <path d="M846.800 591 V588.200 Q846.800 586.600 848.400 586.600 H851.200 M858.400 586.600 H861.200 Q862.800 586.600 862.800 588.200 V591 M862.800 598 V600.800 Q862.800 602.400 861.200 602.400 H858.400 M851.200 602.400 H848.400 Q846.800 602.400 846.800 600.800 V598"/>
</svg>

<!-- help -->
<div class="abs" style="left:1011px;top:550px;width:50px;height:50px;border-radius:25px;background:#fff"></div>
<svg class="abs" style="left:1023px;top:557px" width="26" height="36" viewBox="0 0 26 36">
  <defs><linearGradient id="qg" x1="0" y1="0" x2="1" y2="1"><stop offset="0" stop-color="#5b4bdb"/><stop offset=".6" stop-color="#4a7ff0"/><stop offset="1" stop-color="#3aa0f5"/></linearGradient></defs>
  <path d="M6.500 11 C7 6.500 10 4.500 13.500 4.500 C17.500 4.500 20 7 20 10 C20 13 18 14.500 15.500 16 C13.500 17.200 13 18.500 13 21" fill="none" stroke="url(#qg)" stroke-width="4.200"/>
  <path d="M11 14 h4.200 v8 h-4.200z" fill="#5b4bdb"/>
  <circle cx="12.800" cy="27.500" r="3" fill="#a63fe0"/>
</svg>
<!-- chevron tab -->
<svg class="abs" style="left:999px;top:611px" width="72" height="19" viewBox="0 0 72 19">
  <path d="M0 19 Q6 19 7 14 L8 5 Q8.500 0 13 0 L59 0 Q63.500 0 64 5 L65 14 Q66 19 72 19 Z" fill="#25252f"/>
  <path d="M31 8 L36 13 L41 8" fill="none" stroke="#9a9aa6" stroke-width="1.600" stroke-linecap="round" stroke-linejoin="round"/>
</svg>

<!-- TIMELINE -->
<div id="timeline"></div>
<div class="abs" style="left:378px;top:630px;width:722px;height:1px;background:#2b2b36"></div>
<div class="abs" style="left:378px;top:681px;width:722px;height:1px;background:#23232d"></div>
<style>.rl{font-size:13px;font-weight:bold;color:#8b8b96;line-height:14px;white-space:nowrap;letter-spacing:-.35px}</style>
<!-- toolbar icons -->
<svg class="abs" style="left:396px;top:644px" width="190" height="26" viewBox="396 644 190 26" fill="none" stroke-width="1.500" stroke-linecap="round" stroke-linejoin="round">
  <!-- undo -->
  <g stroke="#c8c8d2"><path d="M405.500 649 L401 653.500 L405.500 658"/><path d="M401.500 653.500 H410.500 A5 5 0 0 1 410.500 663.500 H403.500"/></g>
  <!-- redo -->
  <g stroke="#5e5e6a"><path d="M451.500 649 L456 653.500 L451.500 658"/><path d="M455.500 653.500 H446.500 A5 5 0 0 0 446.500 663.500 H453.500"/></g>
  <!-- scissors -->
  <g stroke="#c8c8d2"><circle cx="484" cy="662" r="3.200"/><circle cx="493" cy="662" r="3.200"/><path d="M485.600 659.200 L493.500 646.500 M491.400 659.200 L483.500 646.500"/></g>
  <!-- trash -->
  <g stroke="#5e5e6a"><path d="M519.500 651 H538.500 M525.500 651 Q525.500 647.500 529 647.500 Q532.500 647.500 532.500 651 M521.500 651 L523 663 Q523.300 665.500 526 665.500 H532 Q534.700 665.500 535 663 L536.500 651 M526.800 655 V661.500 M531.200 655 V661.500"/></g>
  <!-- duplicate -->
  <g stroke="#5e5e6a"><rect x="563.500" y="647" width="11.500" height="17.500" rx="2.400"/><path d="M561 650 V664 Q561 667 564 667 H569"/></g>
  <circle cx="574.500" cy="661.500" r="5.600" fill="#6a6a76" stroke="#191922" stroke-width="1.200"/>
  <path d="M574.500 658.800 V664.200 M571.800 661.500 H577.200" stroke="#191922" stroke-width="1.400"/>
</svg>
<!-- time -->
<div class="abs" style="left:666px;top:647px;font-size:15px;font-weight:bold;color:#fff;line-height:20px;white-space:nowrap;letter-spacing:.78px">00:24<span style="color:#9a9aa6;font-weight:normal">.40</span><span style="color:#9a9aa6"> / </span>00:26<span style="color:#9a9aa6;font-weight:normal">.78</span></div>
<!-- zoom icons -->
<svg class="abs" style="left:976px;top:644px" width="110" height="26" viewBox="976 644 110 26" fill="none" stroke-width="1.500" stroke-linecap="round" stroke-linejoin="round">
  <g stroke="#c8c8d2"><circle cx="987.500" cy="654.800" r="6.200"/><path d="M992 659.400 L997 664.500 M987.500 651.800 V657.800 M984.500 654.800 H990.500"/></g>
  <g stroke="#5e5e6a"><circle cx="1027" cy="654.800" r="6.200"/><path d="M1031.500 659.400 L1036.500 664.500 M1024 654.800 H1030"/></g>
  <g stroke="#c8c8d2"><path d="M1079.500 647 L1072.500 654 M1072.500 649 V654.300 H1077.800 M1060.500 666 L1067.500 659 M1067.500 664 V658.700 H1062.200"/></g>
</svg>
<!-- ruler -->
<div class="abs" style="left:398.0px;top:687px;width:2px;height:21px;background:#474753"></div>
<div class="abs" style="left:450.6px;top:687px;width:2px;height:10px;background:#474753"></div>
<div class="abs" style="left:503.3px;top:687px;width:2px;height:21px;background:#474753"></div>
<div class="abs" style="left:555.9px;top:687px;width:2px;height:10px;background:#474753"></div>
<div class="abs" style="left:608.5px;top:687px;width:2px;height:21px;background:#474753"></div>
<div class="abs" style="left:661.1px;top:687px;width:2px;height:10px;background:#474753"></div>
<div class="abs" style="left:713.8px;top:687px;width:2px;height:21px;background:#474753"></div>
<div class="abs" style="left:766.4px;top:687px;width:2px;height:10px;background:#474753"></div>
<div class="abs" style="left:819.1px;top:687px;width:2px;height:21px;background:#474753"></div>
<div class="abs" style="left:871.7px;top:687px;width:2px;height:10px;background:#474753"></div>
<div class="abs" style="left:924.4px;top:687px;width:2px;height:21px;background:#474753"></div>
<div class="abs" style="left:977.0px;top:687px;width:2px;height:10px;background:#474753"></div>
<div class="abs" style="left:1029.6px;top:687px;width:2px;height:21px;background:#474753"></div>
<div class="abs" style="left:1082.2px;top:687px;width:2px;height:10px;background:#474753"></div>
<div class="abs rl" style="left:405.5px;top:690px">0</div>
<div class="abs rl" style="left:510.8px;top:690px">0:12</div>
<div class="abs rl" style="left:616.0px;top:690px">0:24</div>
<div class="abs rl" style="left:721.3px;top:690px">0:36</div>
<div class="abs rl" style="left:826.6px;top:690px">0:48</div>
<div class="abs rl" style="left:931.9px;top:690px">1:00</div>
<div class="abs rl" style="left:1037.1px;top:690px">1:12</div>
<!-- tracks -->
<div class="abs" style="left:378px;top:798px;width:726px;height:35px;background:#1e1e29;border-radius:0 4px 4px 0"></div>
<div class="abs" style="left:378px;top:844px;width:726px;height:64px;background:#1e1e29;border-radius:0 4px 4px 0"></div>
<!-- text clip -->
<div class="abs" style="left:401px;top:798px;width:46px;height:35px;background:#5b4bdb;border-radius:5px;overflow:hidden">
  <div class="abs" style="left:8px;top:5.500px;width:20px;text-align:center;font-family:'Liberation Serif',serif;font-size:21px;line-height:24px;color:#d4cdff">T</div>
  <div class="abs" style="left:36.500px;top:7.500px;font-size:16px;font-weight:bold;line-height:20px;color:#fff">Te</div>
  <div class="abs" style="left:0;top:0;width:46px;height:35px;border-radius:5px;box-shadow:inset 0 0 0 1px rgba(255,255,255,.22)"></div>
</div>
<!-- video clip -->
<div class="abs" style="left:401px;top:843px;width:185px;height:65px;border-radius:6px;overflow:hidden;background:#8d7477">
 <svg width="185" height="65" viewBox="0 0 185 65">
  <defs>
   <filter id="bv" x="-5%" y="-5%" width="110%" height="110%"><feGaussianBlur stdDeviation=".9"/></filter>
   <g id="frm">
    <rect width="31" height="65" fill="#9f878a"/>
    <rect width="31" height="27" fill="#a9afb0"/>
    <rect x="0" y="0" width="3" height="22" fill="#8a908f"/><rect x="4" y="0" width="3" height="15" fill="#d2d7d7"/>
    <rect x="8" y="0" width="4" height="25" fill="#666b69"/><rect x="13" y="0" width="6" height="13" fill="#dde1e1"/>
    <rect x="15" y="10" width="3" height="14" fill="#8d9391"/>
    <rect x="20" y="0" width="2.500" height="26" fill="#70756f"/><rect x="23" y="0" width="4" height="17" fill="#c8cdcd"/>
    <rect x="27" y="0" width="4" height="28" fill="#4a4f4c"/>
    <rect x="0" y="17" width="31" height="9" fill="#7c827c" opacity=".6"/>
    <path d="M2 25 C14 27 25 40 31 60 L31 25 Z" fill="#8b8a82"/>
    <path d="M1 25.500 C13 28 24 40 30 60" fill="none" stroke="#6b635e" stroke-width="2.200"/>
    <path d="M0 27.500 C10 30 21 42 27 65 L0 65 Z" fill="#a48c8f"/>
   </g>
  </defs>
  <g filter="url(#bv)">
   <use href="#frm" x="0"/><use href="#frm" x="29"/><use href="#frm" x="53"/><use href="#frm" x="83"/><use href="#frm" x="98"/><use href="#frm" x="128"/><use href="#frm" x="148"/><use href="#frm" x="164"/><rect x="72" y="30" width="113" height="35" fill="#9c8386" opacity=".5"/>
  </g>
 </svg>
 <div class="abs" style="left:0;top:0;width:185px;height:65px;border-radius:6px;box-shadow:inset 0 0 0 1px rgba(255,255,255,.14)"></div>
 <div class="abs" style="left:22px;top:20px;width:25px;height:24px;border-radius:4px;background:rgba(50,48,58,.88)"></div>
 <svg class="abs" style="left:25px;top:22px" width="20" height="20" viewBox="0 0 20 20" fill="none" stroke="#fff" stroke-width="1.200" stroke-linejoin="round" stroke-linecap="round">
   <path d="M3 7.500 H6 L10.500 3.800 V16.200 L6 12.500 H3 Z"/><path d="M13 7.200 Q14.600 10 13 12.800 M15.300 5.200 Q17.800 10 15.300 14.800"/>
 </svg>
</div>
<!-- sticker clip -->
<div class="abs" style="left:591px;top:843px;width:39px;height:65px;border-radius:6px;overflow:hidden;background:#3b3b48;border:1px solid #4a4a58">
  <svg class="abs" style="left:8px;top:3px" width="42" height="57"><use href="#cow"/></svg>
</div>
<!-- playhead -->
<div class="abs" style="left:611px;top:690px;width:3px;height:290px;background:#fff"></div>
<svg class="abs" style="left:604px;top:680px" width="17" height="17" viewBox="0 0 17 17"><path d="M.8 3 Q.8 .5 3.300 .5 H13.700 Q16.200 .5 16.200 3 V9 Q16.200 10.500 15 11.600 L10 16 Q8.500 17 7 16 L2 11.600 Q.8 10.500 .8 9 Z" fill="#fff"/></svg>

</div>
</body>
</html>
